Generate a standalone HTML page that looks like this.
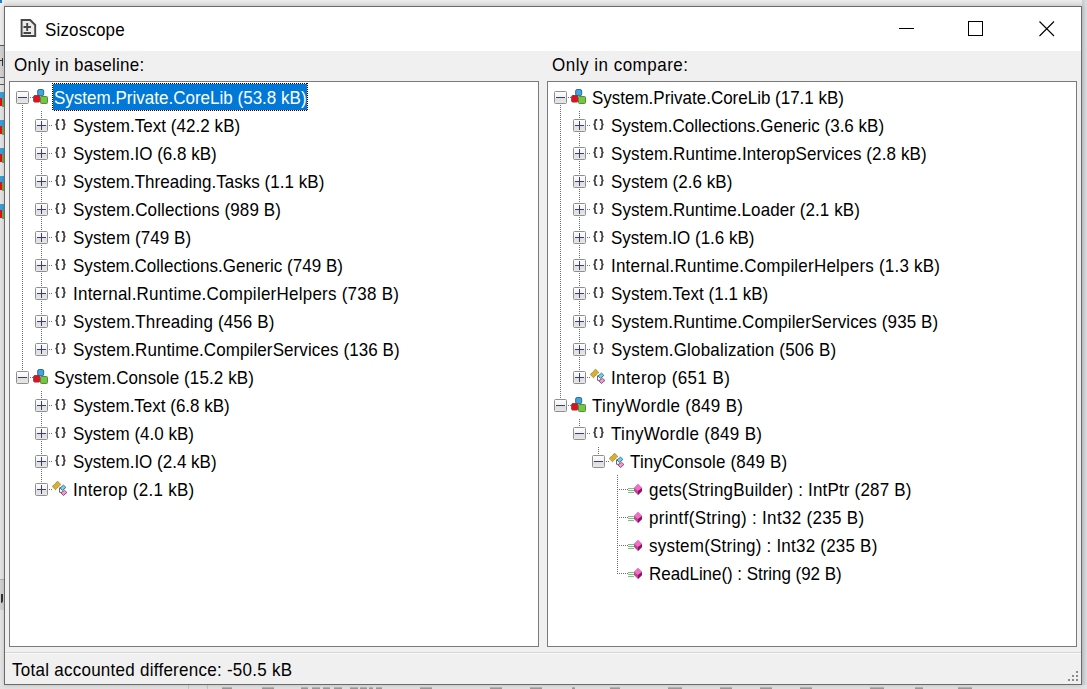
<!DOCTYPE html>
<html><head><meta charset="utf-8"><style>
*{box-sizing:border-box}
html,body{margin:0;padding:0}
body{width:1087px;height:689px;overflow:hidden;position:relative;background:#e3e3e3;font-family:"Liberation Sans", sans-serif;font-size:17px;color:#000}
.abs{position:absolute}
#win{position:absolute;left:4px;top:6px;width:1078px;height:679px;border:1px solid #6a6a6a;background:#f0f0f0;box-shadow:0 0 5px rgba(0,0,0,0.18)}
#title{position:absolute;left:0;top:0;width:1076px;height:44px;background:#fff}
.lbl{position:absolute;white-space:nowrap;line-height:20px;transform:scaleY(1.07);transform-origin:0 16px}
.tree{position:absolute;top:81px;width:530px;height:566px;border:1px solid #7a7a7a;background:#fff}
.vd{position:absolute;width:1px;background:repeating-linear-gradient(to bottom,#6e6e6e 0 1px,transparent 1px 2px)}
.hd{position:absolute;height:1px;background:repeating-linear-gradient(to right,#6e6e6e 0 1px,transparent 1px 2px)}
.bx{position:absolute;width:13px;height:13px;border:1px solid #8e8f8f;border-radius:1.5px;background:linear-gradient(to bottom,#fcfcfc 0,#f3f3f3 50%,#dedede 50%,#e6e6e6 100%)}
.bx i{position:absolute;background:#3c3e6e}
.bx i.h{left:1px;top:5px;width:9px;height:1px}
.bx i.v{left:5px;top:1px;width:1px;height:9px}
.ic{position:absolute}
.tx{position:absolute;height:28px;line-height:28px;padding:0 2px;white-space:nowrap}
.tx.sel{color:#fff}
div.selbg{position:absolute;background:#0078d7}
div.selbg i{position:absolute}
div.selbg i.ft,div.selbg i.fb{left:0;width:100%;height:1px;background:repeating-linear-gradient(to right,#000 0 1px,#fff 1px 2px)}
div.selbg i.ft{top:0} div.selbg i.fb{bottom:0}
div.selbg i.fl,div.selbg i.fr{top:0;height:100%;width:1px;background:repeating-linear-gradient(to bottom,#000 0 1px,#fff 1px 2px)}
div.selbg i.fl{left:0} div.selbg i.fr{right:0}
</style></head><body>
<div class="abs" style="left:0;top:0;width:1087px;height:689px;background:linear-gradient(to bottom,#ececec 0,#e2e2e2 6px,#e6e6e6 40px,#e6e6e6 100%)"></div>
<div class="abs" style="left:1082px;top:0;width:5px;height:689px;background:linear-gradient(to right,#c8cbd1,#d4d6db 3px,#dcdee1)"></div>
<div class="abs" style="left:0;top:0;width:4px;height:45px;background:#efefef"></div>
<div class="abs" style="left:0;top:0;width:2px;height:3px;background:#1e7fd8"></div>
<div class="abs" style="left:0;top:45px;width:4px;height:1px;background:#5a5a5a"></div>
<div class="abs" style="left:0;top:46px;width:4px;height:31px;background:#d3d3d3"></div>
<div class="abs" style="left:0;top:60px;width:3px;height:1px;background:#333"></div>
<div class="abs" style="left:2px;top:58px;width:1px;height:8px;background:#333"></div>
<div class="abs" style="left:0;top:77px;width:4px;height:1px;background:#5a5a5a"></div>
<div class="abs" style="left:0;top:78px;width:4px;height:6px;background:#e4e4e4"></div>
<div class="abs" style="left:0;top:84px;width:4px;height:1px;background:#5a5a5a"></div>
<div class="abs" style="left:0;top:85px;width:4px;height:494px;background:#e6e6e6"></div>
<div class="abs" style="left:0;top:579px;width:4px;height:1px;background:#b0b0b0"></div>
<div class="abs" style="left:0;top:580px;width:4px;height:30px;background:#d2d2d2"></div>
<div class="abs" style="left:0;top:594px;width:3px;height:9px;border-right:2px solid #333;border-radius:0 0 2px 0"></div>
<div class="abs" style="left:0;top:685px;width:1087px;height:4px;background:#e2e2e2"></div>
<div class="abs" style="left:0;top:92px;width:4px;height:7px;background:#3aa0d8"></div><div class="abs" style="left:0;top:98px;width:2px;height:8px;background:#e0101c"></div><div class="abs" style="left:2px;top:99px;width:2px;height:8px;background:#6cb040"></div><div class="abs" style="left:0;top:120px;width:4px;height:7px;background:#3aa0d8"></div><div class="abs" style="left:0;top:126px;width:2px;height:8px;background:#e0101c"></div><div class="abs" style="left:2px;top:127px;width:2px;height:8px;background:#6cb040"></div><div class="abs" style="left:0;top:148px;width:4px;height:7px;background:#3aa0d8"></div><div class="abs" style="left:0;top:154px;width:2px;height:8px;background:#e0101c"></div><div class="abs" style="left:2px;top:155px;width:2px;height:8px;background:#6cb040"></div><div class="abs" style="left:0;top:176px;width:4px;height:7px;background:#3aa0d8"></div><div class="abs" style="left:0;top:182px;width:2px;height:8px;background:#e0101c"></div><div class="abs" style="left:2px;top:183px;width:2px;height:8px;background:#6cb040"></div><div class="abs" style="left:0;top:204px;width:4px;height:7px;background:#3aa0d8"></div><div class="abs" style="left:0;top:210px;width:2px;height:8px;background:#e0101c"></div><div class="abs" style="left:2px;top:211px;width:2px;height:8px;background:#6cb040"></div>
<div class="abs" style="left:222px;top:687px;width:10px;height:2px;background:linear-gradient(#c4c4c4,#8c8c8c)"></div><div class="abs" style="left:262px;top:687px;width:12px;height:2px;background:linear-gradient(#c4c4c4,#8c8c8c)"></div><div class="abs" style="left:301px;top:687px;width:7px;height:2px;background:linear-gradient(#c4c4c4,#8c8c8c)"></div><div class="abs" style="left:312px;top:687px;width:8px;height:2px;background:linear-gradient(#c4c4c4,#8c8c8c)"></div><div class="abs" style="left:323px;top:687px;width:7px;height:2px;background:linear-gradient(#c4c4c4,#8c8c8c)"></div><div class="abs" style="left:334px;top:687px;width:8px;height:2px;background:linear-gradient(#c4c4c4,#8c8c8c)"></div><div class="abs" style="left:350px;top:687px;width:8px;height:2px;background:linear-gradient(#c4c4c4,#8c8c8c)"></div><div class="abs" style="left:360px;top:687px;width:7px;height:2px;background:linear-gradient(#c4c4c4,#8c8c8c)"></div><div class="abs" style="left:369px;top:687px;width:4px;height:2px;background:linear-gradient(#c4c4c4,#8c8c8c)"></div><div class="abs" style="left:376px;top:687px;width:6px;height:2px;background:linear-gradient(#c4c4c4,#8c8c8c)"></div><div class="abs" style="left:420px;top:687px;width:12px;height:2px;background:linear-gradient(#c4c4c4,#8c8c8c)"></div><div class="abs" style="left:490px;top:687px;width:12px;height:2px;background:linear-gradient(#c4c4c4,#8c8c8c)"></div><div class="abs" style="left:530px;top:687px;width:12px;height:2px;background:linear-gradient(#c4c4c4,#8c8c8c)"></div><div class="abs" style="left:572px;top:687px;width:3px;height:2px;background:linear-gradient(#c4c4c4,#8c8c8c)"></div><div class="abs" style="left:610px;top:687px;width:10px;height:2px;background:linear-gradient(#c4c4c4,#8c8c8c)"></div><div class="abs" style="left:668px;top:687px;width:14px;height:2px;background:linear-gradient(#c4c4c4,#8c8c8c)"></div><div class="abs" style="left:720px;top:687px;width:12px;height:2px;background:linear-gradient(#c4c4c4,#8c8c8c)"></div><div class="abs" style="left:760px;top:687px;width:12px;height:2px;background:linear-gradient(#c4c4c4,#8c8c8c)"></div><div class="abs" style="left:800px;top:687px;width:12px;height:2px;background:linear-gradient(#c4c4c4,#8c8c8c)"></div><div class="abs" style="left:870px;top:687px;width:14px;height:2px;background:linear-gradient(#c4c4c4,#8c8c8c)"></div><div class="abs" style="left:915px;top:687px;width:8px;height:2px;background:linear-gradient(#c4c4c4,#8c8c8c)"></div><div class="abs" style="left:958px;top:687px;width:14px;height:2px;background:linear-gradient(#c4c4c4,#8c8c8c)"></div><div class="abs" style="left:188px;top:685px;width:1px;height:4px;background:#c6c6c6"></div><div class="abs" style="left:207px;top:685px;width:1px;height:4px;background:#c6c6c6"></div>
<div id="win">
 <div id="title">
  <svg class="abs" style="left:-5px;top:-7px" width="45" height="45" viewBox="0 0 45 45">
   <path d="M21.6,20 H30.2 L35.2,25 V36 H21.6 Z" fill="#ebebeb" stroke="#474747" stroke-width="1.9"/>
   <path d="M23.5,27 H31 M27.2,23 V31 M23.5,33 H31" stroke="#474747" stroke-width="1.9"/>
  </svg>
  <div class="lbl" style="left:40px;top:14px;letter-spacing:0.150px;">Sizoscope</div>
  <div class="abs" style="left:894px;top:21px;width:15px;height:1px;background:#000"></div>
  <div class="abs" style="left:963px;top:14px;width:15px;height:15px;border:1px solid #000"></div>
  <svg class="abs" style="left:1034px;top:14px" width="16" height="16" viewBox="0 0 16 16"><path d="M0.5,0.5 L15,15 M15,0.5 L0.5,15" stroke="#000" stroke-width="1.1"/></svg>
 </div>
 <div class="lbl" style="left:9px;top:49px;letter-spacing:0.287px;">Only in baseline:</div>
 <div class="lbl" style="left:547px;top:49px;letter-spacing:0.500px;">Only in compare:</div>
 <div class="abs" style="left:0;top:645px;width:1076px;height:1px;background:#d7d7d7"></div>
 <div class="abs" style="left:0;top:646px;width:1076px;height:1px;background:#f8f8f8"></div>
 <div class="lbl" style="left:7px;top:654px;letter-spacing:0.260px;">Total accounted difference: -50.5 kB</div>
</div>
<div class="tree" style="left:9px"></div>
<div class="tree" style="left:547px"></div>
<div class="vd" style="left:22px;top:97px;height:281px"></div>
<div class="hd" style="left:22px;top:97px;width:11px"></div>
<div class="vd" style="left:41px;top:125px;height:29px"></div>
<div class="vd" style="left:41px;top:111px;height:15px"></div>
<div class="hd" style="left:41px;top:125px;width:11px"></div>
<div class="vd" style="left:41px;top:153px;height:29px"></div>
<div class="hd" style="left:41px;top:153px;width:11px"></div>
<div class="vd" style="left:41px;top:181px;height:29px"></div>
<div class="hd" style="left:41px;top:181px;width:11px"></div>
<div class="vd" style="left:41px;top:209px;height:29px"></div>
<div class="hd" style="left:41px;top:209px;width:11px"></div>
<div class="vd" style="left:41px;top:237px;height:29px"></div>
<div class="hd" style="left:41px;top:237px;width:11px"></div>
<div class="vd" style="left:41px;top:265px;height:29px"></div>
<div class="hd" style="left:41px;top:265px;width:11px"></div>
<div class="vd" style="left:41px;top:293px;height:29px"></div>
<div class="hd" style="left:41px;top:293px;width:11px"></div>
<div class="vd" style="left:41px;top:321px;height:29px"></div>
<div class="hd" style="left:41px;top:321px;width:11px"></div>
<div class="hd" style="left:41px;top:349px;width:11px"></div>
<div class="hd" style="left:22px;top:377px;width:11px"></div>
<div class="vd" style="left:41px;top:405px;height:29px"></div>
<div class="vd" style="left:41px;top:391px;height:15px"></div>
<div class="hd" style="left:41px;top:405px;width:11px"></div>
<div class="vd" style="left:41px;top:433px;height:29px"></div>
<div class="hd" style="left:41px;top:433px;width:11px"></div>
<div class="vd" style="left:41px;top:461px;height:29px"></div>
<div class="hd" style="left:41px;top:461px;width:11px"></div>
<div class="hd" style="left:41px;top:489px;width:11px"></div>
<div class="bx" style="left:16px;top:91px"><i class="h"></i></div>
<svg class="ic" style="left:33px;top:88px" width="16" height="18" viewBox="0 0 16 18"><rect x="4.7" y="1.5" width="6" height="6.2" rx="1.5" fill="#3aa8e2" stroke="#2f6a8c"/><rect x="0.7" y="7.6" width="6.2" height="6.4" rx="1" fill="#e2101e" stroke="#a02a34"/><rect x="7.5" y="8.5" width="7" height="7" rx="1" fill="#72c83c" stroke="#558a42"/></svg>
<div class="selbg" style="left:52px;top:83px;width:256px;height:28px"><i class="ft"></i><i class="fb"></i><i class="fl"></i><i class="fr"></i></div>
<div class="tx sel" style="left:52px;top:83px"><span style="position:relative;display:inline-block;transform:scaleY(1.07);transform-origin:0 20px;top:2px;letter-spacing:0.010px;">System.Private.CoreLib (53.8 kB)</span></div>
<div class="bx" style="left:35px;top:119px"><i class="h"></i><i class="v"></i></div>
<svg class="ic" style="left:52px;top:116px" width="16" height="18" viewBox="0 0 16 18"><path d="M7.2,3.9 H6.2 Q5,3.9 5,5.2 V7.4 Q5,8.5 3.4,8.5 Q5,8.5 5,9.6 V11.9 Q5,13.2 6.2,13.2 H7.2" fill="none" stroke="#333" stroke-width="1.6"/><path d="M9.8,3.9 H10.8 Q12,3.9 12,5.2 V7.4 Q12,8.5 13.6,8.5 Q12,8.5 12,9.6 V11.9 Q12,13.2 10.8,13.2 H9.8" fill="none" stroke="#333" stroke-width="1.6"/></svg>
<div class="tx" style="left:71px;top:111px"><span style="position:relative;display:inline-block;transform:scaleY(1.07);transform-origin:0 20px;top:2px;letter-spacing:0.045px;">System.Text (42.2 kB)</span></div>
<div class="bx" style="left:35px;top:147px"><i class="h"></i><i class="v"></i></div>
<svg class="ic" style="left:52px;top:144px" width="16" height="18" viewBox="0 0 16 18"><path d="M7.2,3.9 H6.2 Q5,3.9 5,5.2 V7.4 Q5,8.5 3.4,8.5 Q5,8.5 5,9.6 V11.9 Q5,13.2 6.2,13.2 H7.2" fill="none" stroke="#333" stroke-width="1.6"/><path d="M9.8,3.9 H10.8 Q12,3.9 12,5.2 V7.4 Q12,8.5 13.6,8.5 Q12,8.5 12,9.6 V11.9 Q12,13.2 10.8,13.2 H9.8" fill="none" stroke="#333" stroke-width="1.6"/></svg>
<div class="tx" style="left:71px;top:139px"><span style="position:relative;display:inline-block;transform:scaleY(1.07);transform-origin:0 20px;top:2px;letter-spacing:0.006px;">System.IO (6.8 kB)</span></div>
<div class="bx" style="left:35px;top:175px"><i class="h"></i><i class="v"></i></div>
<svg class="ic" style="left:52px;top:172px" width="16" height="18" viewBox="0 0 16 18"><path d="M7.2,3.9 H6.2 Q5,3.9 5,5.2 V7.4 Q5,8.5 3.4,8.5 Q5,8.5 5,9.6 V11.9 Q5,13.2 6.2,13.2 H7.2" fill="none" stroke="#333" stroke-width="1.6"/><path d="M9.8,3.9 H10.8 Q12,3.9 12,5.2 V7.4 Q12,8.5 13.6,8.5 Q12,8.5 12,9.6 V11.9 Q12,13.2 10.8,13.2 H9.8" fill="none" stroke="#333" stroke-width="1.6"/></svg>
<div class="tx" style="left:71px;top:167px"><span style="position:relative;display:inline-block;transform:scaleY(1.07);transform-origin:0 20px;top:2px;letter-spacing:0.033px;">System.Threading.Tasks (1.1 kB)</span></div>
<div class="bx" style="left:35px;top:203px"><i class="h"></i><i class="v"></i></div>
<svg class="ic" style="left:52px;top:200px" width="16" height="18" viewBox="0 0 16 18"><path d="M7.2,3.9 H6.2 Q5,3.9 5,5.2 V7.4 Q5,8.5 3.4,8.5 Q5,8.5 5,9.6 V11.9 Q5,13.2 6.2,13.2 H7.2" fill="none" stroke="#333" stroke-width="1.6"/><path d="M9.8,3.9 H10.8 Q12,3.9 12,5.2 V7.4 Q12,8.5 13.6,8.5 Q12,8.5 12,9.6 V11.9 Q12,13.2 10.8,13.2 H9.8" fill="none" stroke="#333" stroke-width="1.6"/></svg>
<div class="tx" style="left:71px;top:195px"><span style="position:relative;display:inline-block;transform:scaleY(1.07);transform-origin:0 20px;top:2px;letter-spacing:0.116px;">System.Collections (989 B)</span></div>
<div class="bx" style="left:35px;top:231px"><i class="h"></i><i class="v"></i></div>
<svg class="ic" style="left:52px;top:228px" width="16" height="18" viewBox="0 0 16 18"><path d="M7.2,3.9 H6.2 Q5,3.9 5,5.2 V7.4 Q5,8.5 3.4,8.5 Q5,8.5 5,9.6 V11.9 Q5,13.2 6.2,13.2 H7.2" fill="none" stroke="#333" stroke-width="1.6"/><path d="M9.8,3.9 H10.8 Q12,3.9 12,5.2 V7.4 Q12,8.5 13.6,8.5 Q12,8.5 12,9.6 V11.9 Q12,13.2 10.8,13.2 H9.8" fill="none" stroke="#333" stroke-width="1.6"/></svg>
<div class="tx" style="left:71px;top:223px"><span style="position:relative;display:inline-block;transform:scaleY(1.07);transform-origin:0 20px;top:2px;letter-spacing:0.077px;">System (749 B)</span></div>
<div class="bx" style="left:35px;top:259px"><i class="h"></i><i class="v"></i></div>
<svg class="ic" style="left:52px;top:256px" width="16" height="18" viewBox="0 0 16 18"><path d="M7.2,3.9 H6.2 Q5,3.9 5,5.2 V7.4 Q5,8.5 3.4,8.5 Q5,8.5 5,9.6 V11.9 Q5,13.2 6.2,13.2 H7.2" fill="none" stroke="#333" stroke-width="1.6"/><path d="M9.8,3.9 H10.8 Q12,3.9 12,5.2 V7.4 Q12,8.5 13.6,8.5 Q12,8.5 12,9.6 V11.9 Q12,13.2 10.8,13.2 H9.8" fill="none" stroke="#333" stroke-width="1.6"/></svg>
<div class="tx" style="left:71px;top:251px"><span style="position:relative;display:inline-block;transform:scaleY(1.07);transform-origin:0 20px;top:2px;letter-spacing:0.021px;">System.Collections.Generic (749 B)</span></div>
<div class="bx" style="left:35px;top:287px"><i class="h"></i><i class="v"></i></div>
<svg class="ic" style="left:52px;top:284px" width="16" height="18" viewBox="0 0 16 18"><path d="M7.2,3.9 H6.2 Q5,3.9 5,5.2 V7.4 Q5,8.5 3.4,8.5 Q5,8.5 5,9.6 V11.9 Q5,13.2 6.2,13.2 H7.2" fill="none" stroke="#333" stroke-width="1.6"/><path d="M9.8,3.9 H10.8 Q12,3.9 12,5.2 V7.4 Q12,8.5 13.6,8.5 Q12,8.5 12,9.6 V11.9 Q12,13.2 10.8,13.2 H9.8" fill="none" stroke="#333" stroke-width="1.6"/></svg>
<div class="tx" style="left:71px;top:279px"><span style="position:relative;display:inline-block;transform:scaleY(1.07);transform-origin:0 20px;top:2px;letter-spacing:0.241px;">Internal.Runtime.CompilerHelpers (738 B)</span></div>
<div class="bx" style="left:35px;top:315px"><i class="h"></i><i class="v"></i></div>
<svg class="ic" style="left:52px;top:312px" width="16" height="18" viewBox="0 0 16 18"><path d="M7.2,3.9 H6.2 Q5,3.9 5,5.2 V7.4 Q5,8.5 3.4,8.5 Q5,8.5 5,9.6 V11.9 Q5,13.2 6.2,13.2 H7.2" fill="none" stroke="#333" stroke-width="1.6"/><path d="M9.8,3.9 H10.8 Q12,3.9 12,5.2 V7.4 Q12,8.5 13.6,8.5 Q12,8.5 12,9.6 V11.9 Q12,13.2 10.8,13.2 H9.8" fill="none" stroke="#333" stroke-width="1.6"/></svg>
<div class="tx" style="left:71px;top:307px"><span style="position:relative;display:inline-block;transform:scaleY(1.07);transform-origin:0 20px;top:2px;letter-spacing:0.130px;">System.Threading (456 B)</span></div>
<div class="bx" style="left:35px;top:343px"><i class="h"></i><i class="v"></i></div>
<svg class="ic" style="left:52px;top:340px" width="16" height="18" viewBox="0 0 16 18"><path d="M7.2,3.9 H6.2 Q5,3.9 5,5.2 V7.4 Q5,8.5 3.4,8.5 Q5,8.5 5,9.6 V11.9 Q5,13.2 6.2,13.2 H7.2" fill="none" stroke="#333" stroke-width="1.6"/><path d="M9.8,3.9 H10.8 Q12,3.9 12,5.2 V7.4 Q12,8.5 13.6,8.5 Q12,8.5 12,9.6 V11.9 Q12,13.2 10.8,13.2 H9.8" fill="none" stroke="#333" stroke-width="1.6"/></svg>
<div class="tx" style="left:71px;top:335px"><span style="position:relative;display:inline-block;transform:scaleY(1.07);transform-origin:0 20px;top:2px;letter-spacing:0.095px;">System.Runtime.CompilerServices (136 B)</span></div>
<div class="bx" style="left:16px;top:371px"><i class="h"></i></div>
<svg class="ic" style="left:33px;top:368px" width="16" height="18" viewBox="0 0 16 18"><rect x="4.7" y="1.5" width="6" height="6.2" rx="1.5" fill="#3aa8e2" stroke="#2f6a8c"/><rect x="0.7" y="7.6" width="6.2" height="6.4" rx="1" fill="#e2101e" stroke="#a02a34"/><rect x="7.5" y="8.5" width="7" height="7" rx="1" fill="#72c83c" stroke="#558a42"/></svg>
<div class="tx" style="left:52px;top:363px"><span style="position:relative;display:inline-block;transform:scaleY(1.07);transform-origin:0 20px;top:2px;letter-spacing:0.104px;">System.Console (15.2 kB)</span></div>
<div class="bx" style="left:35px;top:399px"><i class="h"></i><i class="v"></i></div>
<svg class="ic" style="left:52px;top:396px" width="16" height="18" viewBox="0 0 16 18"><path d="M7.2,3.9 H6.2 Q5,3.9 5,5.2 V7.4 Q5,8.5 3.4,8.5 Q5,8.5 5,9.6 V11.9 Q5,13.2 6.2,13.2 H7.2" fill="none" stroke="#333" stroke-width="1.6"/><path d="M9.8,3.9 H10.8 Q12,3.9 12,5.2 V7.4 Q12,8.5 13.6,8.5 Q12,8.5 12,9.6 V11.9 Q12,13.2 10.8,13.2 H9.8" fill="none" stroke="#333" stroke-width="1.6"/></svg>
<div class="tx" style="left:71px;top:391px"><span style="position:relative;display:inline-block;transform:scaleY(1.07);transform-origin:0 20px;top:2px;letter-spacing:-0.005px;">System.Text (6.8 kB)</span></div>
<div class="bx" style="left:35px;top:427px"><i class="h"></i><i class="v"></i></div>
<svg class="ic" style="left:52px;top:424px" width="16" height="18" viewBox="0 0 16 18"><path d="M7.2,3.9 H6.2 Q5,3.9 5,5.2 V7.4 Q5,8.5 3.4,8.5 Q5,8.5 5,9.6 V11.9 Q5,13.2 6.2,13.2 H7.2" fill="none" stroke="#333" stroke-width="1.6"/><path d="M9.8,3.9 H10.8 Q12,3.9 12,5.2 V7.4 Q12,8.5 13.6,8.5 Q12,8.5 12,9.6 V11.9 Q12,13.2 10.8,13.2 H9.8" fill="none" stroke="#333" stroke-width="1.6"/></svg>
<div class="tx" style="left:71px;top:419px"><span style="position:relative;display:inline-block;transform:scaleY(1.07);transform-origin:0 20px;top:2px;letter-spacing:0.000px;">System (4.0 kB)</span></div>
<div class="bx" style="left:35px;top:455px"><i class="h"></i><i class="v"></i></div>
<svg class="ic" style="left:52px;top:452px" width="16" height="18" viewBox="0 0 16 18"><path d="M7.2,3.9 H6.2 Q5,3.9 5,5.2 V7.4 Q5,8.5 3.4,8.5 Q5,8.5 5,9.6 V11.9 Q5,13.2 6.2,13.2 H7.2" fill="none" stroke="#333" stroke-width="1.6"/><path d="M9.8,3.9 H10.8 Q12,3.9 12,5.2 V7.4 Q12,8.5 13.6,8.5 Q12,8.5 12,9.6 V11.9 Q12,13.2 10.8,13.2 H9.8" fill="none" stroke="#333" stroke-width="1.6"/></svg>
<div class="tx" style="left:71px;top:447px"><span style="position:relative;display:inline-block;transform:scaleY(1.07);transform-origin:0 20px;top:2px;letter-spacing:0.000px;">System.IO (2.4 kB)</span></div>
<div class="bx" style="left:35px;top:483px"><i class="h"></i><i class="v"></i></div>
<svg class="ic" style="left:52px;top:480px" width="16" height="18" viewBox="0 0 16 18"><path d="M9,7.8 H7.5 V12.3 H9.5" fill="none" stroke="#6a6a6a" stroke-width="1"/><path d="M5.6,1.2 L8.8,4.5 L3.4,9.8 L0.2,6.5 Z" fill="#d9b02e" stroke="#7e6a22" stroke-width="0.9" stroke-dasharray="1 0.6"/><path d="M11.5,5.1 L13.9,7.4 L10.3,10.4 L8,8 Z" fill="#78cdf0" stroke="#2f6f8a" stroke-width="0.9"/><path d="M12.5,10.3 L14.9,12.5 L11.4,15.5 L8.9,12.8 Z" fill="#f29ad2" stroke="#8a3a72" stroke-width="0.9"/></svg>
<div class="tx" style="left:71px;top:475px"><span style="position:relative;display:inline-block;transform:scaleY(1.07);transform-origin:0 20px;top:2px;letter-spacing:0.267px;">Interop (2.1 kB)</span></div>
<div class="vd" style="left:560px;top:97px;height:309px"></div>
<div class="hd" style="left:560px;top:97px;width:11px"></div>
<div class="vd" style="left:579px;top:125px;height:29px"></div>
<div class="vd" style="left:579px;top:111px;height:15px"></div>
<div class="hd" style="left:579px;top:125px;width:11px"></div>
<div class="vd" style="left:579px;top:153px;height:29px"></div>
<div class="hd" style="left:579px;top:153px;width:11px"></div>
<div class="vd" style="left:579px;top:181px;height:29px"></div>
<div class="hd" style="left:579px;top:181px;width:11px"></div>
<div class="vd" style="left:579px;top:209px;height:29px"></div>
<div class="hd" style="left:579px;top:209px;width:11px"></div>
<div class="vd" style="left:579px;top:237px;height:29px"></div>
<div class="hd" style="left:579px;top:237px;width:11px"></div>
<div class="vd" style="left:579px;top:265px;height:29px"></div>
<div class="hd" style="left:579px;top:265px;width:11px"></div>
<div class="vd" style="left:579px;top:293px;height:29px"></div>
<div class="hd" style="left:579px;top:293px;width:11px"></div>
<div class="vd" style="left:579px;top:321px;height:29px"></div>
<div class="hd" style="left:579px;top:321px;width:11px"></div>
<div class="vd" style="left:579px;top:349px;height:29px"></div>
<div class="hd" style="left:579px;top:349px;width:11px"></div>
<div class="hd" style="left:579px;top:377px;width:11px"></div>
<div class="hd" style="left:560px;top:405px;width:11px"></div>
<div class="vd" style="left:579px;top:419px;height:15px"></div>
<div class="hd" style="left:579px;top:433px;width:11px"></div>
<div class="vd" style="left:598px;top:447px;height:15px"></div>
<div class="hd" style="left:598px;top:461px;width:11px"></div>
<div class="vd" style="left:617px;top:489px;height:29px"></div>
<div class="vd" style="left:617px;top:475px;height:15px"></div>
<div class="hd" style="left:617px;top:489px;width:11px"></div>
<div class="vd" style="left:617px;top:517px;height:29px"></div>
<div class="hd" style="left:617px;top:517px;width:11px"></div>
<div class="vd" style="left:617px;top:545px;height:29px"></div>
<div class="hd" style="left:617px;top:545px;width:11px"></div>
<div class="hd" style="left:617px;top:573px;width:11px"></div>
<div class="bx" style="left:554px;top:91px"><i class="h"></i></div>
<svg class="ic" style="left:571px;top:88px" width="16" height="18" viewBox="0 0 16 18"><rect x="4.7" y="1.5" width="6" height="6.2" rx="1.5" fill="#3aa8e2" stroke="#2f6a8c"/><rect x="0.7" y="7.6" width="6.2" height="6.4" rx="1" fill="#e2101e" stroke="#a02a34"/><rect x="7.5" y="8.5" width="7" height="7" rx="1" fill="#72c83c" stroke="#558a42"/></svg>
<div class="tx" style="left:590px;top:83px"><span style="position:relative;display:inline-block;transform:scaleY(1.07);transform-origin:0 20px;top:2px;letter-spacing:-0.010px;">System.Private.CoreLib (17.1 kB)</span></div>
<div class="bx" style="left:573px;top:119px"><i class="h"></i><i class="v"></i></div>
<svg class="ic" style="left:590px;top:116px" width="16" height="18" viewBox="0 0 16 18"><path d="M7.2,3.9 H6.2 Q5,3.9 5,5.2 V7.4 Q5,8.5 3.4,8.5 Q5,8.5 5,9.6 V11.9 Q5,13.2 6.2,13.2 H7.2" fill="none" stroke="#333" stroke-width="1.6"/><path d="M9.8,3.9 H10.8 Q12,3.9 12,5.2 V7.4 Q12,8.5 13.6,8.5 Q12,8.5 12,9.6 V11.9 Q12,13.2 10.8,13.2 H9.8" fill="none" stroke="#333" stroke-width="1.6"/></svg>
<div class="tx" style="left:609px;top:111px"><span style="position:relative;display:inline-block;transform:scaleY(1.07);transform-origin:0 20px;top:2px;letter-spacing:0.000px;">System.Collections.Generic (3.6 kB)</span></div>
<div class="bx" style="left:573px;top:147px"><i class="h"></i><i class="v"></i></div>
<svg class="ic" style="left:590px;top:144px" width="16" height="18" viewBox="0 0 16 18"><path d="M7.2,3.9 H6.2 Q5,3.9 5,5.2 V7.4 Q5,8.5 3.4,8.5 Q5,8.5 5,9.6 V11.9 Q5,13.2 6.2,13.2 H7.2" fill="none" stroke="#333" stroke-width="1.6"/><path d="M9.8,3.9 H10.8 Q12,3.9 12,5.2 V7.4 Q12,8.5 13.6,8.5 Q12,8.5 12,9.6 V11.9 Q12,13.2 10.8,13.2 H9.8" fill="none" stroke="#333" stroke-width="1.6"/></svg>
<div class="tx" style="left:609px;top:139px"><span style="position:relative;display:inline-block;transform:scaleY(1.07);transform-origin:0 20px;top:2px;letter-spacing:0.100px;">System.Runtime.InteropServices (2.8 kB)</span></div>
<div class="bx" style="left:573px;top:175px"><i class="h"></i><i class="v"></i></div>
<svg class="ic" style="left:590px;top:172px" width="16" height="18" viewBox="0 0 16 18"><path d="M7.2,3.9 H6.2 Q5,3.9 5,5.2 V7.4 Q5,8.5 3.4,8.5 Q5,8.5 5,9.6 V11.9 Q5,13.2 6.2,13.2 H7.2" fill="none" stroke="#333" stroke-width="1.6"/><path d="M9.8,3.9 H10.8 Q12,3.9 12,5.2 V7.4 Q12,8.5 13.6,8.5 Q12,8.5 12,9.6 V11.9 Q12,13.2 10.8,13.2 H9.8" fill="none" stroke="#333" stroke-width="1.6"/></svg>
<div class="tx" style="left:609px;top:167px"><span style="position:relative;display:inline-block;transform:scaleY(1.07);transform-origin:0 20px;top:2px;letter-spacing:0.029px;">System (2.6 kB)</span></div>
<div class="bx" style="left:573px;top:203px"><i class="h"></i><i class="v"></i></div>
<svg class="ic" style="left:590px;top:200px" width="16" height="18" viewBox="0 0 16 18"><path d="M7.2,3.9 H6.2 Q5,3.9 5,5.2 V7.4 Q5,8.5 3.4,8.5 Q5,8.5 5,9.6 V11.9 Q5,13.2 6.2,13.2 H7.2" fill="none" stroke="#333" stroke-width="1.6"/><path d="M9.8,3.9 H10.8 Q12,3.9 12,5.2 V7.4 Q12,8.5 13.6,8.5 Q12,8.5 12,9.6 V11.9 Q12,13.2 10.8,13.2 H9.8" fill="none" stroke="#333" stroke-width="1.6"/></svg>
<div class="tx" style="left:609px;top:195px"><span style="position:relative;display:inline-block;transform:scaleY(1.07);transform-origin:0 20px;top:2px;letter-spacing:0.076px;">System.Runtime.Loader (2.1 kB)</span></div>
<div class="bx" style="left:573px;top:231px"><i class="h"></i><i class="v"></i></div>
<svg class="ic" style="left:590px;top:228px" width="16" height="18" viewBox="0 0 16 18"><path d="M7.2,3.9 H6.2 Q5,3.9 5,5.2 V7.4 Q5,8.5 3.4,8.5 Q5,8.5 5,9.6 V11.9 Q5,13.2 6.2,13.2 H7.2" fill="none" stroke="#333" stroke-width="1.6"/><path d="M9.8,3.9 H10.8 Q12,3.9 12,5.2 V7.4 Q12,8.5 13.6,8.5 Q12,8.5 12,9.6 V11.9 Q12,13.2 10.8,13.2 H9.8" fill="none" stroke="#333" stroke-width="1.6"/></svg>
<div class="tx" style="left:609px;top:223px"><span style="position:relative;display:inline-block;transform:scaleY(1.07);transform-origin:0 20px;top:2px;letter-spacing:-0.006px;">System.IO (1.6 kB)</span></div>
<div class="bx" style="left:573px;top:259px"><i class="h"></i><i class="v"></i></div>
<svg class="ic" style="left:590px;top:256px" width="16" height="18" viewBox="0 0 16 18"><path d="M7.2,3.9 H6.2 Q5,3.9 5,5.2 V7.4 Q5,8.5 3.4,8.5 Q5,8.5 5,9.6 V11.9 Q5,13.2 6.2,13.2 H7.2" fill="none" stroke="#333" stroke-width="1.6"/><path d="M9.8,3.9 H10.8 Q12,3.9 12,5.2 V7.4 Q12,8.5 13.6,8.5 Q12,8.5 12,9.6 V11.9 Q12,13.2 10.8,13.2 H9.8" fill="none" stroke="#333" stroke-width="1.6"/></svg>
<div class="tx" style="left:609px;top:251px"><span style="position:relative;display:inline-block;transform:scaleY(1.07);transform-origin:0 20px;top:2px;letter-spacing:0.218px;">Internal.Runtime.CompilerHelpers (1.3 kB)</span></div>
<div class="bx" style="left:573px;top:287px"><i class="h"></i><i class="v"></i></div>
<svg class="ic" style="left:590px;top:284px" width="16" height="18" viewBox="0 0 16 18"><path d="M7.2,3.9 H6.2 Q5,3.9 5,5.2 V7.4 Q5,8.5 3.4,8.5 Q5,8.5 5,9.6 V11.9 Q5,13.2 6.2,13.2 H7.2" fill="none" stroke="#333" stroke-width="1.6"/><path d="M9.8,3.9 H10.8 Q12,3.9 12,5.2 V7.4 Q12,8.5 13.6,8.5 Q12,8.5 12,9.6 V11.9 Q12,13.2 10.8,13.2 H9.8" fill="none" stroke="#333" stroke-width="1.6"/></svg>
<div class="tx" style="left:609px;top:279px"><span style="position:relative;display:inline-block;transform:scaleY(1.07);transform-origin:0 20px;top:2px;letter-spacing:0.021px;">System.Text (1.1 kB)</span></div>
<div class="bx" style="left:573px;top:315px"><i class="h"></i><i class="v"></i></div>
<svg class="ic" style="left:590px;top:312px" width="16" height="18" viewBox="0 0 16 18"><path d="M7.2,3.9 H6.2 Q5,3.9 5,5.2 V7.4 Q5,8.5 3.4,8.5 Q5,8.5 5,9.6 V11.9 Q5,13.2 6.2,13.2 H7.2" fill="none" stroke="#333" stroke-width="1.6"/><path d="M9.8,3.9 H10.8 Q12,3.9 12,5.2 V7.4 Q12,8.5 13.6,8.5 Q12,8.5 12,9.6 V11.9 Q12,13.2 10.8,13.2 H9.8" fill="none" stroke="#333" stroke-width="1.6"/></svg>
<div class="tx" style="left:609px;top:307px"><span style="position:relative;display:inline-block;transform:scaleY(1.07);transform-origin:0 20px;top:2px;letter-spacing:0.108px;">System.Runtime.CompilerServices (935 B)</span></div>
<div class="bx" style="left:573px;top:343px"><i class="h"></i><i class="v"></i></div>
<svg class="ic" style="left:590px;top:340px" width="16" height="18" viewBox="0 0 16 18"><path d="M7.2,3.9 H6.2 Q5,3.9 5,5.2 V7.4 Q5,8.5 3.4,8.5 Q5,8.5 5,9.6 V11.9 Q5,13.2 6.2,13.2 H7.2" fill="none" stroke="#333" stroke-width="1.6"/><path d="M9.8,3.9 H10.8 Q12,3.9 12,5.2 V7.4 Q12,8.5 13.6,8.5 Q12,8.5 12,9.6 V11.9 Q12,13.2 10.8,13.2 H9.8" fill="none" stroke="#333" stroke-width="1.6"/></svg>
<div class="tx" style="left:609px;top:335px"><span style="position:relative;display:inline-block;transform:scaleY(1.07);transform-origin:0 20px;top:2px;letter-spacing:0.185px;">System.Globalization (506 B)</span></div>
<div class="bx" style="left:573px;top:371px"><i class="h"></i><i class="v"></i></div>
<svg class="ic" style="left:590px;top:368px" width="16" height="18" viewBox="0 0 16 18"><path d="M9,7.8 H7.5 V12.3 H9.5" fill="none" stroke="#6a6a6a" stroke-width="1"/><path d="M5.6,1.2 L8.8,4.5 L3.4,9.8 L0.2,6.5 Z" fill="#d9b02e" stroke="#7e6a22" stroke-width="0.9" stroke-dasharray="1 0.6"/><path d="M11.5,5.1 L13.9,7.4 L10.3,10.4 L8,8 Z" fill="#78cdf0" stroke="#2f6f8a" stroke-width="0.9"/><path d="M12.5,10.3 L14.9,12.5 L11.4,15.5 L8.9,12.8 Z" fill="#f29ad2" stroke="#8a3a72" stroke-width="0.9"/></svg>
<div class="tx" style="left:609px;top:363px"><span style="position:relative;display:inline-block;transform:scaleY(1.07);transform-origin:0 20px;top:2px;letter-spacing:0.386px;">Interop (651 B)</span></div>
<div class="bx" style="left:554px;top:399px"><i class="h"></i></div>
<svg class="ic" style="left:571px;top:396px" width="16" height="18" viewBox="0 0 16 18"><rect x="4.7" y="1.5" width="6" height="6.2" rx="1.5" fill="#3aa8e2" stroke="#2f6a8c"/><rect x="0.7" y="7.6" width="6.2" height="6.4" rx="1" fill="#e2101e" stroke="#a02a34"/><rect x="7.5" y="8.5" width="7" height="7" rx="1" fill="#72c83c" stroke="#558a42"/></svg>
<div class="tx" style="left:590px;top:391px"><span style="position:relative;display:inline-block;transform:scaleY(1.07);transform-origin:0 20px;top:2px;letter-spacing:0.324px;">TinyWordle (849 B)</span></div>
<div class="bx" style="left:573px;top:427px"><i class="h"></i></div>
<svg class="ic" style="left:590px;top:424px" width="16" height="18" viewBox="0 0 16 18"><path d="M7.2,3.9 H6.2 Q5,3.9 5,5.2 V7.4 Q5,8.5 3.4,8.5 Q5,8.5 5,9.6 V11.9 Q5,13.2 6.2,13.2 H7.2" fill="none" stroke="#333" stroke-width="1.6"/><path d="M9.8,3.9 H10.8 Q12,3.9 12,5.2 V7.4 Q12,8.5 13.6,8.5 Q12,8.5 12,9.6 V11.9 Q12,13.2 10.8,13.2 H9.8" fill="none" stroke="#333" stroke-width="1.6"/></svg>
<div class="tx" style="left:609px;top:419px"><span style="position:relative;display:inline-block;transform:scaleY(1.07);transform-origin:0 20px;top:2px;letter-spacing:0.324px;">TinyWordle (849 B)</span></div>
<div class="bx" style="left:592px;top:455px"><i class="h"></i></div>
<svg class="ic" style="left:609px;top:452px" width="16" height="18" viewBox="0 0 16 18"><path d="M9,7.8 H7.5 V12.3 H9.5" fill="none" stroke="#6a6a6a" stroke-width="1"/><path d="M5.6,1.2 L8.8,4.5 L3.4,9.8 L0.2,6.5 Z" fill="#d9b02e" stroke="#7e6a22" stroke-width="0.9" stroke-dasharray="1 0.6"/><path d="M11.5,5.1 L13.9,7.4 L10.3,10.4 L8,8 Z" fill="#78cdf0" stroke="#2f6f8a" stroke-width="0.9"/><path d="M12.5,10.3 L14.9,12.5 L11.4,15.5 L8.9,12.8 Z" fill="#f29ad2" stroke="#8a3a72" stroke-width="0.9"/></svg>
<div class="tx" style="left:628px;top:447px"><span style="position:relative;display:inline-block;transform:scaleY(1.07);transform-origin:0 20px;top:2px;letter-spacing:0.156px;">TinyConsole (849 B)</span></div>
<svg class="ic" style="left:628px;top:480px" width="16" height="18" viewBox="0 0 16 18"><path d="M0,8.5 H6 M0,10.5 H6 M0,12.5 H6" stroke="#7fbf7f" stroke-width="1"/><path d="M10,4 L14,8 V11 L10,15 L6,11 V8 Z" fill="#c83c9c"/><path d="M10,4 L14,8 L10,11 L6,8 Z" fill="#f070c4"/><path d="M14,8 V11 L10,15 V11 Z" fill="#8c1464"/></svg>
<div class="tx" style="left:647px;top:475px"><span style="position:relative;display:inline-block;transform:scaleY(1.07);transform-origin:0 20px;top:2px;letter-spacing:0.183px;">gets(StringBuilder) : IntPtr (287 B)</span></div>
<svg class="ic" style="left:628px;top:508px" width="16" height="18" viewBox="0 0 16 18"><path d="M0,8.5 H6 M0,10.5 H6 M0,12.5 H6" stroke="#7fbf7f" stroke-width="1"/><path d="M10,4 L14,8 V11 L10,15 L6,11 V8 Z" fill="#c83c9c"/><path d="M10,4 L14,8 L10,11 L6,8 Z" fill="#f070c4"/><path d="M14,8 V11 L10,15 V11 Z" fill="#8c1464"/></svg>
<div class="tx" style="left:647px;top:503px"><span style="position:relative;display:inline-block;transform:scaleY(1.07);transform-origin:0 20px;top:2px;letter-spacing:0.317px;">printf(String) : Int32 (235 B)</span></div>
<svg class="ic" style="left:628px;top:536px" width="16" height="18" viewBox="0 0 16 18"><path d="M0,8.5 H6 M0,10.5 H6 M0,12.5 H6" stroke="#7fbf7f" stroke-width="1"/><path d="M10,4 L14,8 V11 L10,15 L6,11 V8 Z" fill="#c83c9c"/><path d="M10,4 L14,8 L10,11 L6,8 Z" fill="#f070c4"/><path d="M14,8 V11 L10,15 V11 Z" fill="#8c1464"/></svg>
<div class="tx" style="left:647px;top:531px"><span style="position:relative;display:inline-block;transform:scaleY(1.07);transform-origin:0 20px;top:2px;letter-spacing:0.217px;">system(String) : Int32 (235 B)</span></div>
<svg class="ic" style="left:628px;top:564px" width="16" height="18" viewBox="0 0 16 18"><path d="M0,8.5 H6 M0,10.5 H6 M0,12.5 H6" stroke="#7fbf7f" stroke-width="1"/><path d="M10,4 L14,8 V11 L10,15 L6,11 V8 Z" fill="#c83c9c"/><path d="M10,4 L14,8 L10,11 L6,8 Z" fill="#f070c4"/><path d="M14,8 V11 L10,15 V11 Z" fill="#8c1464"/></svg>
<div class="tx" style="left:647px;top:559px"><span style="position:relative;display:inline-block;transform:scaleY(1.07);transform-origin:0 20px;top:2px;letter-spacing:-0.044px;">ReadLine() : String (92 B)</span></div>
<div class="abs" style="left:1076px;top:671px;width:2px;height:2px;background:#8a8a8a"></div><div class="abs" style="left:1072px;top:675px;width:2px;height:2px;background:#8a8a8a"></div><div class="abs" style="left:1076px;top:675px;width:2px;height:2px;background:#8a8a8a"></div><div class="abs" style="left:1068px;top:679px;width:2px;height:2px;background:#8a8a8a"></div><div class="abs" style="left:1072px;top:679px;width:2px;height:2px;background:#8a8a8a"></div><div class="abs" style="left:1076px;top:679px;width:2px;height:2px;background:#8a8a8a"></div>
</body></html>
